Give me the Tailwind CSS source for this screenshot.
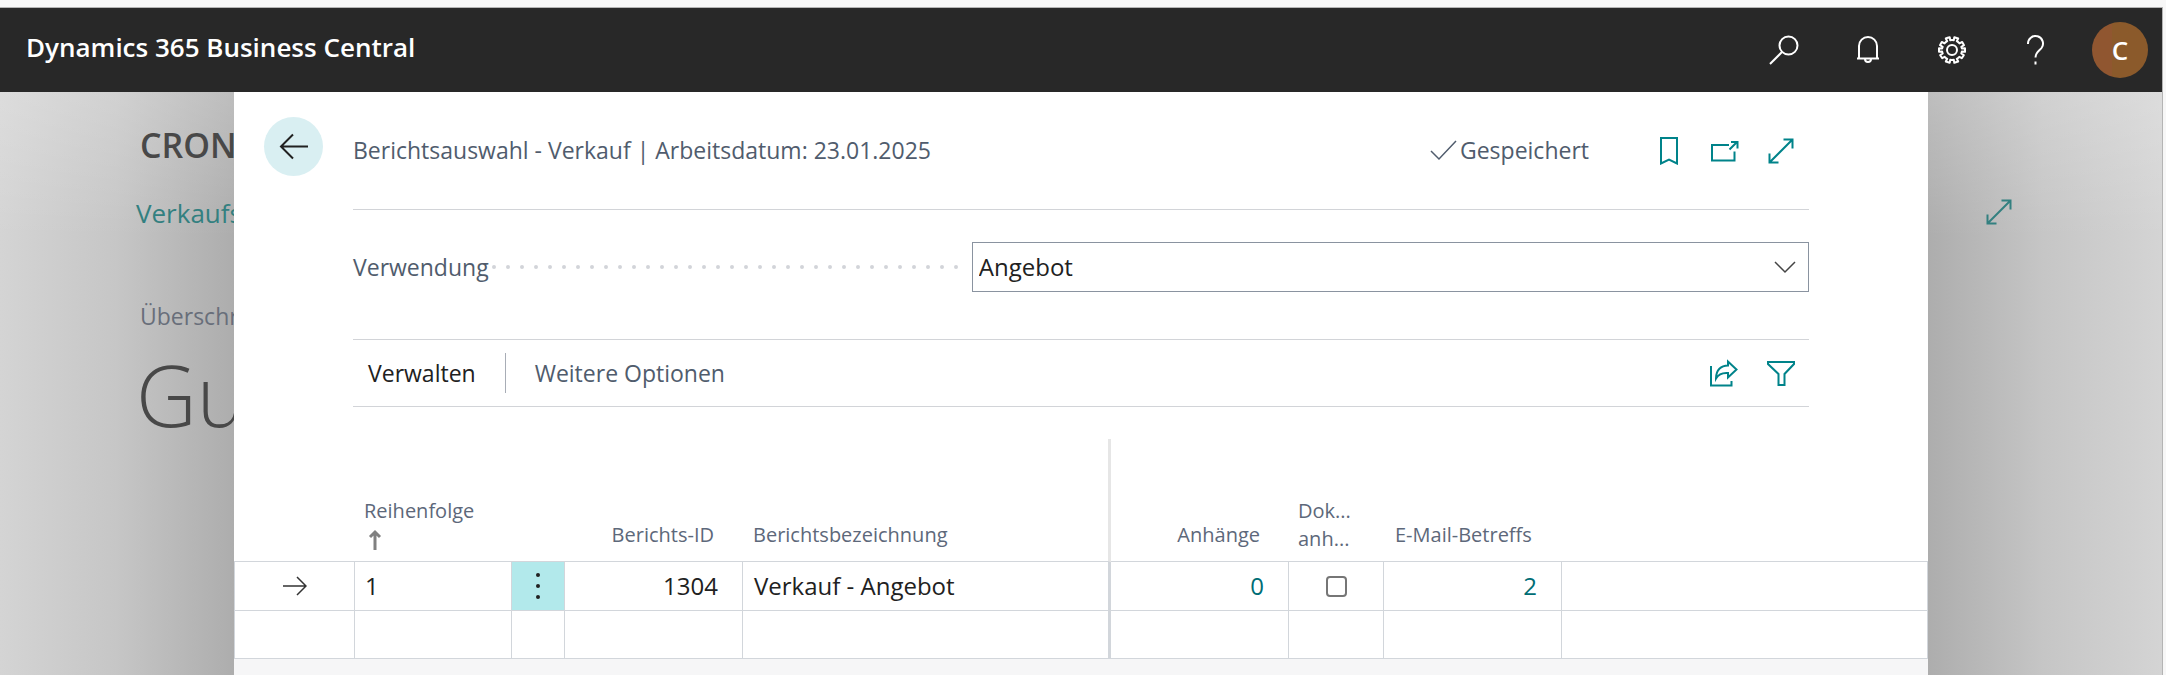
<!DOCTYPE html>
<html lang="de">
<head>
<meta charset="utf-8">
<meta name="viewport" content="width=device-width, initial-scale=1">
<title>Berichtsauswahl - Verkauf</title>
<script src="https://cdn.jsdelivr.net/npm/@tailwindcss/browser@4"></script>
</head>
<body class="flex min-h-screen flex-col overflow-x-hidden bg-[#f7f7f7] font-['Open_Sans','Noto_Sans',sans-serif] text-2xl text-[#212121]">
<svg class="hidden" aria-hidden="true">
  <symbol id="expand" viewBox="0 0 28 28"><path d="M2.500 25.500 25.500 2.500M16.500 2.500h9v9M2.500 16.500v9h9" fill="none" stroke="currentColor" stroke-width="2"/></symbol>
</svg>
<div class="h-[7px] shrink-0"></div>
<div class="mr-[3px] flex grow flex-col border-t border-r border-[#b4b4b4]">
  <header class="flex h-[84px] items-center justify-between bg-[#282828] pr-[14px] pl-[26px] text-white">
    <a href="#" class="pb-[6px] text-[26px] font-semibold">Dynamics 365 Business Central</a>
    <div class="flex items-center gap-7">
      <button type="button" aria-label="Suchen" class="grid size-14 place-items-center">
        <svg class="size-[30px]" viewBox="0 0 30 30" fill="none" stroke="currentColor" stroke-width="2"><circle cx="19.500" cy="10.500" r="9"/><path d="M13 17 1 29"/></svg>
      </button>
      <button type="button" aria-label="Benachrichtigungen" class="grid size-14 place-items-center">
        <svg class="size-[30px]" viewBox="0 0 30 30" fill="none" stroke="currentColor" stroke-width="2"><path d="M4 23.500h22M6 23V11a9 9 0 0 1 18 0v12M12 24a3 3 0 0 0 6 0"/></svg>
      </button>
      <button type="button" aria-label="Einstellungen" class="grid size-14 place-items-center">
        <svg class="size-[30px]" viewBox="0 0 30 30" fill="none" stroke="currentColor" stroke-width="2" stroke-linejoin="round"><circle cx="15" cy="15" r="5"/><path d="M13.200 5.200 12.700 2.200A13 13 0 0 0 8.800 3.500L10.200 6.200A10 10 0 0 0 7.500 8.400L4.800 7 3 10.200 5.700 11.800A10 10 0 0 0 5.100 13.500L2 13.200V16.800L5.100 16.500A10 10 0 0 0 5.700 18.500L3.200 20.200 5.200 23.200 7.700 21.800A10 10 0 0 0 10.200 23.800L8.800 26.500 12.700 27.800 13.200 24.800A10 10 0 0 0 16.800 24.800L17.300 27.800 21.200 26.500 19.800 23.800A10 10 0 0 0 22.300 21.800L24.800 23.200 26.800 20.200 24.300 18.500A10 10 0 0 0 24.900 16.500L28 16.800V13.200L24.900 13.500A10 10 0 0 0 24.300 11.800L27 10.200 25.200 7 22.500 8.400A10 10 0 0 0 19.800 6.200L21.200 3.500 17.300 2.200 16.800 5.200A10 10 0 0 0 13.200 5.200Z"/></svg>
      </button>
      <button type="button" aria-label="Hilfe" class="grid size-14 place-items-center">
        <svg class="size-[30px]" viewBox="0 0 30 30" fill="none" stroke="currentColor" stroke-width="2"><path d="M7 9a7.500 7.500 0 1 1 13.500 4C18.500 15.500 14.500 17 14.500 22.500M14.500 26.500v3"/></svg>
      </button>
      <button type="button" aria-label="Konto" class="size-14 rounded-full bg-linear-to-r from-[#905630] from-35% to-[#8b5a2b] to-35% text-[26px] font-semibold">C</button>
    </div>
  </header>

  <div class="grid grow grid-cols-[234px_minmax(0,1fr)_234px]">
    <!-- page behind the dialog, dimmed -->
    <aside class="overflow-hidden bg-linear-to-r from-[#d4d4d4] via-[#c6c6c6] to-[#adadad] whitespace-nowrap">
      <div class="h-full bg-linear-to-b from-white/20 to-transparent to-25% pt-[31px] pl-[136px]">
        <p class="pl-1 text-[34px] leading-[44px] font-semibold text-[#484848]">CRON</p>
        <a href="#" class="mt-7 block text-[26px] leading-9 text-[#338080]">Verkaufs</a>
        <p class="mt-[67px] pl-1 text-[23px] leading-9 text-[#686e7a]">Überschr</p>
        <p class="mt-[7px] text-[84px] leading-[108px] font-light text-[#484848]">Gu</p>
      </div>
    </aside>

    <main class="flex flex-col bg-white">
      <div class="flex h-[118px] items-center pr-[119px] pl-[30px]">
        <button type="button" aria-label="Zurück" class="mb-[34px] grid size-[59px] shrink-0 self-end place-items-center rounded-full bg-[#d9eff2]">
          <svg class="size-[30px]" viewBox="0 0 30 30" fill="none" stroke="#212121" stroke-width="2"><path d="M29 14.500H2M14 2.500 2 14.500l12 12"/></svg>
        </button>
        <div class="ml-[30px] flex h-full grow items-center justify-between border-b border-[#d2d4d8] text-[23px] text-[#505c6d]">
          <h1>Berichtsauswahl - Verkauf | Arbeitsdatum: 23.01.2025</h1>
          <div class="flex items-center">
            <svg class="size-7" viewBox="0 0 28 28" fill="none" stroke="currentColor" stroke-width="1.500"><path d="m1 14 8 8L26 4"/></svg>
            <span class="mr-[66px] ml-[2px]">Gespeichert</span>
            <div class="flex gap-7 text-[#00838a]">
              <button type="button" aria-label="Lesezeichen"><svg class="size-[28px]" viewBox="0 0 28 28" fill="none" stroke="currentColor" stroke-width="2"><path d="M6 1h16v25.500l-8-4-8 4z"/></svg></button>
              <button type="button" aria-label="In neuem Fenster öffnen"><svg class="size-[28px]" viewBox="0 0 28 28" fill="none" stroke="currentColor" stroke-width="2"><path d="M18 8H1v15.500h22.500v-9M18.500 12.500l7-7M20 5h6.500v6.500"/></svg></button>
              <button type="button" aria-label="Vergrößern" class="mr-[14px]"><svg class="size-[28px]"><use href="#expand"/></svg></button>
            </div>
          </div>
        </div>
      </div>

      <div class="mt-8 flex items-center pr-[119px] pl-[119px]">
        <div class="flex min-w-0 grow basis-0 items-center">
          <label for="usage" class="text-[23px] text-[#505c6d]">Verwendung</label>
          <svg class="mr-[11px] ml-[2px] h-1 min-w-0 grow" aria-hidden="true"><line x1="3" y1="2" x2="100%" y2="2" stroke="#d2d4d9" stroke-width="4" stroke-linecap="round" stroke-dasharray="0 14"/></svg>
        </div>
        <div class="relative w-[57.500%]">
          <select id="usage" class="h-[50px] w-full appearance-none border border-[#8a93a0] bg-white px-[6px] text-2xl text-[#212121]"><option>Angebot</option></select>
          <svg class="pointer-events-none absolute top-[18px] right-[12px] h-[14px] w-[24px]" viewBox="0 0 24 14" fill="none" stroke="#444" stroke-width="1.500"><path d="m2 2 10 10L22 2"/></svg>
        </div>
      </div>

      <div class="mx-[119px] mt-[47px] flex h-[68px] items-center border-y border-[#d2d4d8] text-[23px]">
        <button type="button" class="pl-[15px]">Verwalten</button>
        <div class="mr-[29px] ml-[29px] h-10 w-px bg-[#a8adb6]"></div>
        <button type="button" class="text-[#505c6d]">Weitere Optionen</button>
        <div class="mr-[13px] ml-auto flex gap-7 text-[#00838a]">
          <button type="button" aria-label="Teilen"><svg class="size-[30px]" viewBox="0 0 30 30" fill="none" stroke="currentColor" stroke-width="2"><path d="M3 8v19.500h20.500V23"/><path d="M8 20.500C8 12 13 7.500 20 7.500V3.500L28.500 11.500 20 19.500V15C14 14.500 10 17 8 20.500Z"/></svg></button>
          <button type="button" aria-label="Filter"><svg class="size-[30px]" viewBox="0 0 30 30" fill="none" stroke="currentColor" stroke-width="2"><path d="M2 4h26v2L18.500 16v11h-6V16L2 6z"/></svg></button>
        </div>
      </div>

      <table class="mt-8 w-full table-fixed border-separate border-spacing-0 text-left [&_td]:border-r [&_td]:border-b [&_td]:border-[#d2d6db] [&_th]:border-b [&_th]:border-b-[#d2d6db]">
        <colgroup>
          <col class="w-[121px]"><col class="w-[157px]"><col class="w-[53px]"><col class="w-[178px]"><col class="w-[368px]"><col class="w-[178px]"><col class="w-[95px]"><col class="w-[178px]"><col>
        </colgroup>
        <thead class="text-xl text-[#5d687a] [&_th]:pb-3 [&_th]:align-bottom [&_th]:leading-7 [&_th]:font-normal">
          <tr class="h-[123px]">
            <th></th>
            <th class="pb-2! pl-[9px]">Reihenfolge
              <svg class="ml-1 block h-7 w-[14px]" viewBox="0 0 14 28" fill="none" stroke="#808080" stroke-width="3"><path d="M7 25V8M2 12l5-5 5 5"/></svg>
            </th>
            <th></th>
            <th class="pr-[29px] text-right">Berichts-ID</th>
            <th class="border-r-[3px] border-r-[#e6e6e6] pl-[10px]">Berichtsbezeichnung</th>
            <th class="pr-[29px] text-right">Anhänge</th>
            <th class="pb-2! pl-[9px]">Dok...<br>anh...</th>
            <th class="pl-[11px]">E-Mail-Betreffs</th>
            <th></th>
          </tr>
        </thead>
        <tbody>
          <tr class="h-[49px]">
            <td class="border-l"><svg class="mx-auto size-6" viewBox="0 0 24 24" fill="none" stroke="#333" stroke-width="1.500"><path d="M0 12h23M14 3l9 9-9 9"/></svg></td>
            <td class="pl-[10px]">1</td>
            <td class="bg-[#b2e9eb]"><button type="button" aria-label="Weitere Optionen anzeigen" class="mx-auto block"><svg class="h-[28px] w-[8px]" viewBox="0 0 8 28" fill="#212121"><circle cx="4" cy="3" r="2"/><circle cx="4" cy="14" r="2"/><circle cx="4" cy="25" r="2"/></svg></button></td>
            <td class="pr-6 text-right">1304</td>
            <td class="border-r-[3px]! pl-[11px]">Verkauf - Angebot</td>
            <td class="pr-6 text-right"><a href="#" class="text-[#006d75]">0</a></td>
            <td><input type="checkbox" aria-label="Dokument anhängen" class="mx-auto block size-[21px] appearance-none rounded-[4px] border-2 border-[#767676] bg-white"></td>
            <td class="pr-6 text-right"><a href="#" class="text-[#006d75]">2</a></td>
            <td></td>
          </tr>
          <tr class="h-[48px]">
            <td class="border-l"></td><td></td><td></td><td></td><td class="border-r-[3px]!"></td><td></td><td></td><td></td><td></td>
          </tr>
        </tbody>
      </table>
      <div class="grow bg-[#f6f6f7]"></div>
    </main>

    <aside class="bg-linear-to-l from-[#d4d4d4] via-[#c6c6c6] to-[#adadad]">
      <div class="h-full bg-linear-to-b from-white/20 to-transparent to-25% pt-[106px] pl-[57px]">
        <button type="button" aria-label="Vergrößern" class="text-[#338080]"><svg class="size-[28px]"><use href="#expand"/></svg></button>
      </div>
    </aside>
  </div>
</div>
</body>
</html>
